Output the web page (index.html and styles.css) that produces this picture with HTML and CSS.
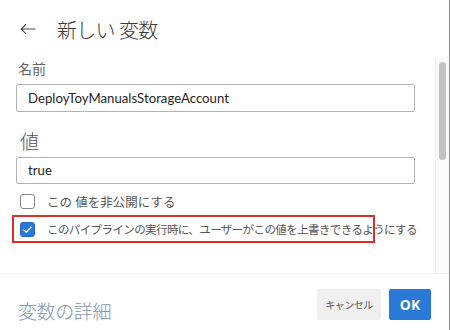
FILE: index.html
```html
<!DOCTYPE html>
<html>
<head>
	<title>新しい変数</title>
	<link rel="stylesheet" href="styles.css">
</head>
<body>
	<div class="panel">
		<div class="header">
			<svg class="back" width="16" height="12" viewBox="0 0 16 12">
				<path d="M15.5 6H1.2M6 1.2L1.2 6L6 10.8" fill="none" stroke="#444" stroke-width="1.1"/>
			</svg>
			<span class="title">新しい 変数</span>
		</div>

		<div class="content">
			<div class="form">
				<div class="label">名前</div>
				<div class="input">DeployToyManualsStorageAccount</div>

				<div class="label label-big">値</div>
				<div class="input input-value">true</div>

				<div class="check-row first">
					<span class="box"></span>
					<span class="check-text">この 値を非公開にする</span>
				</div>
				<div class="check-row second">
					<span class="box checked">
						<svg width="11" height="9" viewBox="0 0 11 9">
							<path d="M1.5 4.6L4.2 7.2L9.5 1.8" fill="none" stroke="#fff" stroke-width="1.3"/>
						</svg>
					</span>
					<span class="check-text small">このパイプラインの実行時に、ユーザーがこの値を上書きできるようにする</span>
					<!-- annotation box drawn over the row -->
					<div class="highlight"></div>
				</div>
			</div>
			<div class="scrollbar">
				<div class="thumb"></div>
			</div>
		</div>

		<div class="footer">
			<span class="details">変数の詳細</span>
			<div class="buttons">
				<button class="btn cancel">キャンセル</button>
				<button class="btn ok">OK</button>
			</div>
		</div>
	</div>
</body>
</html>
```

FILE: styles.css
```css
* {
	box-sizing: border-box;
}

body {
	margin: 0;
	background: #fff;
	font-family: "Noto Sans", "Noto Sans CJK JP", sans-serif;
	color: #333;
}

.panel {
	width: 450px;
	height: 330px;
	border-right: 1px solid #8c8c8c;
	display: flex;
	flex-direction: column;
}

.header {
	height: 58px;
	display: flex;
	align-items: center;
	padding-left: 20px;
}

.back {
	margin-right: 21px;
}

.title {
	font-size: 20px;
	letter-spacing: -0.8px;
	color: #3a3a3a;
	font-weight: 300;
}

.content {
	height: 215px;
	display: flex;
}

.form {
	flex: 1;
	min-width: 0;
	padding: 2px 20px 0 16px;
}

.label {
	font-size: 14px;
	line-height: 18px;
	color: #666;
	padding-left: 2px;
}

.label-big {
	font-size: 19px;
	line-height: 24px;
	margin-top: 18px;
	padding-left: 4px;
	color: #555;
	font-weight: 300;
}

.input {
	margin-top: 6px;
	height: 28px;
	border: 1px solid #b3b3b3;
	border-radius: 2px;
	padding-left: 11px;
	font-family: Lato, "Noto Sans", sans-serif;
	font-size: 13.2px;
	line-height: 26px;
	color: #262626;
}

.input-value {
	margin-top: 3px;
	height: 27px;
	line-height: 25px;
}

.check-row {
	position: relative;
	display: flex;
	align-items: center;
	padding-left: 4px;
}

.check-row.first {
	margin-top: 5px;
	height: 24px;
}

.check-row.second {
	margin-top: 2px;
	height: 28px;
}

.box {
	width: 15px;
	height: 15px;
	border: 1px solid #8a8a8a;
	border-radius: 3px;
	margin-right: 12px;
	display: flex;
	align-items: center;
	justify-content: center;
	flex-shrink: 0;
}

.box.checked {
	background: #2b79d6;
	border-color: #2368bd;
}

.check-text {
	font-size: 12.5px;
	color: #555;
	white-space: nowrap;
}

.check-text.small {
	font-size: 11.5px;
	letter-spacing: -0.6px;
}

.highlight {
	position: absolute;
	left: -4px;
	top: 0;
	width: 363px;
	height: 28px;
	border: 2px solid #d8312b;
}

.scrollbar {
	width: 14px;
	flex-shrink: 0;
	background: #fafafa;
	border-left: 1px solid #ececec;
	padding: 4px 0 0 3px;
}

.thumb {
	width: 7px;
	height: 98px;
	border-radius: 4px;
	background: #c2c2c2;
}

.footer {
	flex: 1;
	border-top: 1px solid #f0f0f0;
	display: flex;
	align-items: flex-start;
	justify-content: space-between;
	padding: 15px 18px 0 18px;
}

.details {
	font-size: 19px;
	letter-spacing: -0.4px;
	color: #8196ae;
	margin-top: 8px;
	font-weight: 300;
}

.buttons {
	display: flex;
	gap: 8px;
}

.btn {
	height: 31px;
	border: none;
	border-radius: 2px;
	font-family: inherit;
	cursor: pointer;
}

.cancel {
	width: 64px;
	background: #efefef;
	font-size: 10px;
	color: #555;
	letter-spacing: -0.5px;
}

.ok {
	width: 42px;
	background: #2b79d6;
	color: #fff;
	font-size: 14px;
	font-weight: bold;
}
```
